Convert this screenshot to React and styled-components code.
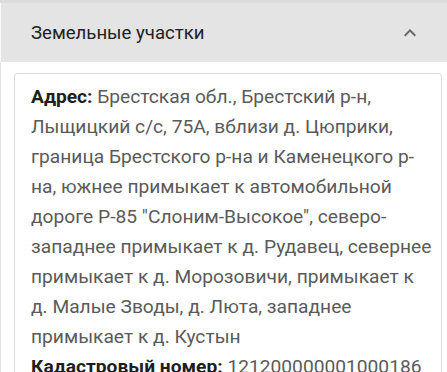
import styled, { createGlobalStyle } from "styled-components";

const GlobalStyle = createGlobalStyle`
    html, body {
        margin: 0;
        padding: 0;
        background: #ffffff;
        font-family: Roboto, "Liberation Sans", sans-serif;
    }
`;

const Page = styled.div`
    width: 447px;
    height: 372px;
    overflow: hidden;
    display: flex;
    flex-direction: column;
`;

const TopEdge = styled.div`
    flex-shrink: 0;
    height: 3px;
    background: #dcdcdc;
`;

const Header = styled.div`
    flex-shrink: 0;
    height: 59px;
    display: flex;
    align-items: center;
    justify-content: space-between;
    padding: 0 25px 0 30px;
    background: #e4e4e4;
    border-left: 1px solid #fafafa;
    box-sizing: border-box;
`;

const Title = styled.span`
    font-size: 18.6px;
    color: #222;
`;

const Body = styled.div`
    flex: 1;
    min-height: 0;
    padding: 11px 5px 0 13px;
    border-left: 1px solid #e2e2e2;
`;

const Card = styled.div`
    border: 1px solid #dcdcdc;
    border-bottom: none;
    border-radius: 4px 4px 0 0;
    padding: 8px 6px 0 16px;
    height: 400px;
`;

const Field = styled.p`
    margin: 0;
    font-size: 19.2px;
    line-height: 30px;
    color: #5a5a5a;
`;

const Label = styled.b`
    color: #1e1e1e;
    font-weight: 700;
`;

const Chevron = () => (
    <svg width="24" height="24" viewBox="0 0 24 24">
        <path
            d="M12 8l-6 6 1.41 1.41L12 10.83l4.59 4.58L18 14z"
            fill="#666"
        />
    </svg>
);

const App = () => {
    return (
        <Page>
            <GlobalStyle />
            <TopEdge />
            <Header>
                <Title>Земельные участки</Title>
                <Chevron />
            </Header>
            <Body>
                <Card>
                    <Field>
                        <Label>Адрес:</Label> Брестская обл., Брестский р-н,
                        Лыщицкий с/с, 75А, вблизи д. Цюприки, граница
                        Брестского р-на и Каменецкого р-на, южнее примыкает к
                        автомобильной дороге Р-85 "Слоним-Высокое",
                        северо-западнее примыкает к д. Рудавец, севернее
                        примыкает к д. Морозовичи, примыкает к д. Малые Зводы,
                        д. Люта, западнее примыкает к д. Кустын
                    </Field>
                    <Field>
                        <Label>Кадастровый номер:</Label> 121200000001000186
                    </Field>
                </Card>
            </Body>
        </Page>
    );
};

export default App;
